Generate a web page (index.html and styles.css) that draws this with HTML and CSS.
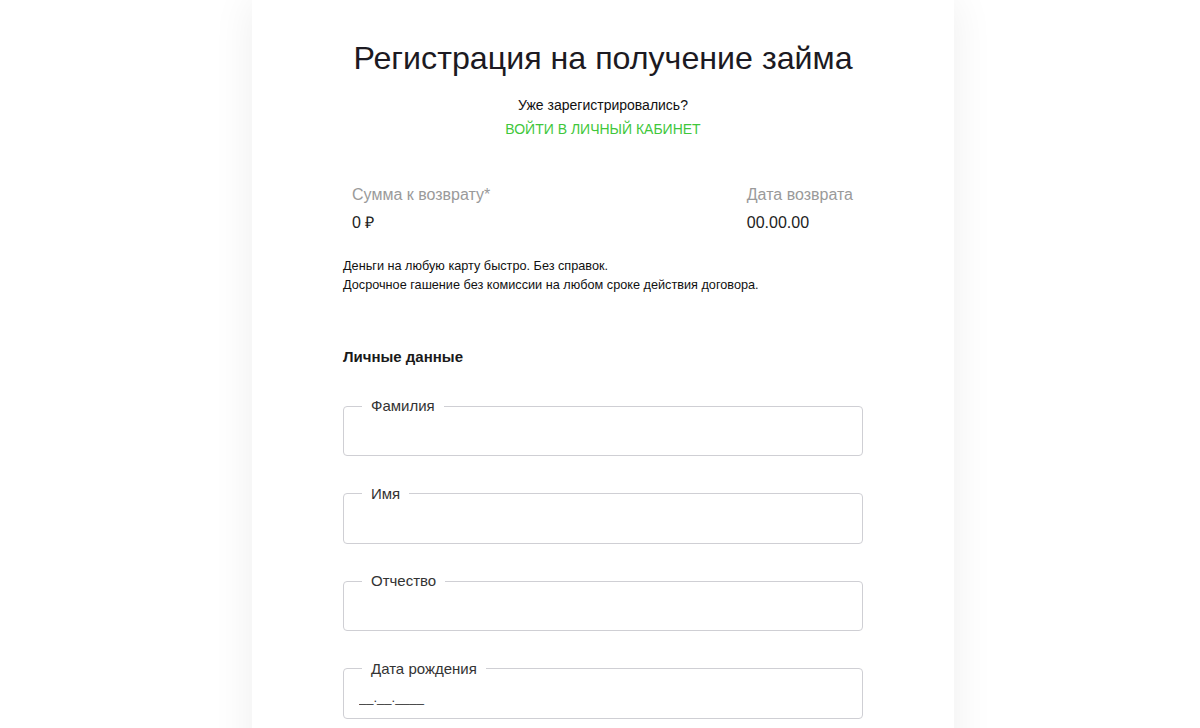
FILE: index.html
```html
<!DOCTYPE html>
<html lang="ru">
<head>
<meta charset="utf-8">
<title>Регистрация на получение займа</title>
<link rel="stylesheet" href="styles.css">
</head>
<body>
<main class="card">
  <h1 class="title">Регистрация на получение займа</h1>
  <p class="already">Уже зарегистрировались?</p>
  <a class="login" href="#">ВОЙТИ В ЛИЧНЫЙ КАБИНЕТ</a>

  <div class="summary">
    <div class="sum-col">
      <div class="sum-label">Сумма к возврату*</div>
      <div class="sum-value">0 ₽</div>
    </div>
    <div class="sum-col">
      <div class="sum-label">Дата возврата</div>
      <div class="sum-value">00.00.00</div>
    </div>
  </div>

  <div class="notes">
    <p>Деньги на любую карту быстро. Без справок.</p>
    <p>Досрочное гашение без комиссии на любом сроке действия договора.</p>
  </div>

  <form class="form">
    <h2 class="section">Личные данные</h2>
    <fieldset class="field"><legend>Фамилия</legend><input type="text"></fieldset>
    <fieldset class="field"><legend>Имя</legend><input type="text"></fieldset>
    <fieldset class="field"><legend>Отчество</legend><input type="text"></fieldset>
    <fieldset class="field"><legend>Дата рождения</legend><input type="text" placeholder="__.__.____"></fieldset>
  </form>
</main>
</body>
</html>
```
FILE: styles.css
```css
html, body {
  margin: 0;
  padding: 0;
  background: #fff;
  font-family: "Liberation Sans", Arial, sans-serif;
  color: #1e1e24;
}
body {
  height: 728px;
  overflow: hidden;
  padding-left: 6px;
}
.card {
  width: 702px;
  margin: 0 auto;
  min-height: 900px;
  box-sizing: border-box;
  padding: 38px 91px 0;
  background: #fff;
  box-shadow: 0 0 40px rgba(0, 0, 0, 0.07);
  display: flex;
  flex-direction: column;
  align-items: stretch;
}
.title {
  margin: 0 -20px;
  font-weight: 400;
  font-size: 32.2px;
  line-height: 40px;
  text-align: center;
  white-space: nowrap;
  color: #1c1a22;
}
.already {
  margin: 17px 0 0;
  font-size: 14px;
  line-height: 20px;
  text-align: center;
  color: #111;
}
.login {
  margin-top: 4px;
  font-size: 14px;
  line-height: 20px;
  text-align: center;
  color: #3fc73b;
  text-decoration: none;
}
.summary {
  display: flex;
  justify-content: space-between;
  padding: 0 10px 0 9px;
  margin-top: 46px;
}
.sum-label {
  font-size: 16px;
  line-height: 20px;
  color: #9a9a9a;
}
.sum-value {
  margin-top: 8px;
  font-size: 16px;
  line-height: 20px;
  color: #222;
}
.notes {
  margin-top: 24px;
}
.notes p {
  margin: 0;
  font-size: 12.7px;
  line-height: 19px;
  color: #111;
}
.form {
  margin-top: 52px;
  display: flex;
  flex-direction: column;
  gap: 28.5px;
}
.section {
  margin: 0 0 1.5px;
  font-size: 15px;
  line-height: 20px;
  font-weight: 700;
  color: #1a1a1a;
}
.field {
  margin: 0;
  padding: 0 15px;
  border: 1px solid #cfcfd4;
  border-radius: 4px;
  height: 59px;
  box-sizing: border-box;
}
.field legend {
  padding: 0 9px;
  margin-left: 3px;
  font-size: 15px;
  line-height: 18px;
  color: #333;
}
.field input {
  border: none;
  outline: none;
  width: 100%;
  padding: 12px 0 0;
  font-family: inherit;
  font-size: 13px;
  color: #222;
  background: transparent;
}
.field input::placeholder {
  color: #333;
}
```
